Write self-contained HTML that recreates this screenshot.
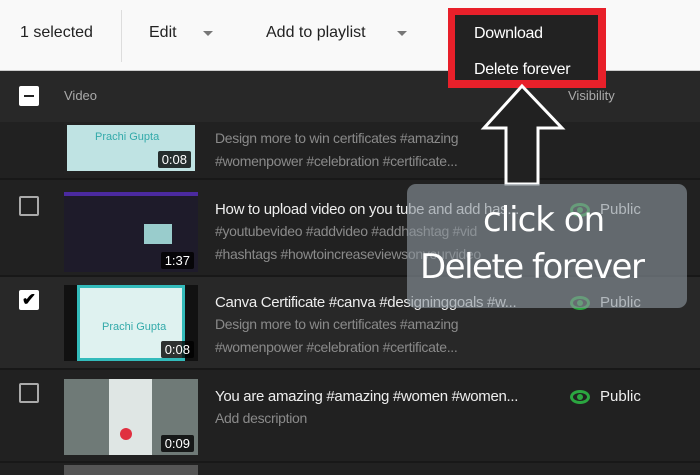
<!DOCTYPE html><html><head><style>
html,body{margin:0;width:700px;height:475px;overflow:hidden}
body{background:#212121;font-family:"Liberation Sans",sans-serif;position:relative}
.a{position:absolute}
.t{color:#eee;font-size:15px;letter-spacing:-0.3px}
.d{color:#8a8a8a;font-size:14px;line-height:23px;letter-spacing:-0.3px}
.cb{position:absolute;left:19px;width:16px;height:16px;border:2px solid #aaa;border-radius:2px}
.th{position:absolute;left:64px;width:134px;height:76px;background:#111;overflow:hidden}
.dur{position:absolute;right:4px;bottom:3px;background:rgba(0,0,0,.8);color:#fff;font-size:13px;padding:1px 4px;border-radius:2px}
.sep{position:absolute;left:0;width:700px;height:2px;background:#181818}
.eye{display:inline-block;width:20px;height:14px;border:3px solid #2ba640;border-radius:50%;vertical-align:middle;margin-right:10px;box-sizing:border-box;position:relative}
.eye:after{content:"";position:absolute;left:4px;top:1px;width:6px;height:6px;background:#2ba640;border-radius:50%}
.pub{position:absolute;left:570px;color:#eee;font-size:15px}
</style></head><body>
<div class="a" style="left:0;top:0;width:700px;height:70px;background:#f9f9f9;border-bottom:1px solid #ccc"></div>
<div class="a" style="left:20px;top:24px;font-size:16px;color:#222">1 selected</div>
<div class="a" style="left:121px;top:10px;width:1px;height:52px;background:#ddd"></div>
<div class="a" style="left:149px;top:24px;font-size:16px;color:#222">Edit</div>
<div class="a" style="left:203px;top:31px;border:5px solid transparent;border-top-color:#777"></div>
<div class="a" style="left:266px;top:24px;font-size:16px;color:#222">Add to playlist</div>
<div class="a" style="left:397px;top:31px;border:5px solid transparent;border-top-color:#777"></div>
<div class="a" style="left:0;top:71px;width:700px;height:51px;background:#282828"></div>
<div class="a" style="left:19px;top:86px;width:20px;height:20px;background:#fff;border-radius:2px"><div class="a" style="left:5px;top:9px;width:10px;height:2px;background:#222"></div></div>
<div class="a" style="left:64px;top:88px;color:#aaa;font-size:13px">Video</div>
<div class="a" style="left:568px;top:88px;color:#aaa;font-size:13px">Visibility</div>
<!-- row0 -->
<div class="th" style="top:122px;height:52px;background:#bfe3e3;border:3px solid #222;box-sizing:border-box"><div style="color:#3aa;font-size:11px;margin:6px 0 0 28px">Prachi Gupta</div><div class="dur">0:08</div></div>
<div class="a d" style="left:215px;top:127px">Design more to win certificates #amazing<br>#womenpower #celebration #certificate...</div>
<div class="sep" style="top:178px"></div>
<!-- row1 -->
<div class="cb" style="top:196px"></div>
<div class="th" style="top:192px;background:#1e1b2a;border-top:4px solid #4b2aa0"><div class="a" style="left:80px;top:28px;width:28px;height:20px;background:#9cc"></div><div class="dur">1:37</div></div>
<div class="a t" style="left:215px;top:201px">How to upload video on you tube and add has...</div>
<div class="a d" style="left:215px;top:220px">#youtubevideo #addvideo #addhashtag #vid<br>#hashtags #howtoincreaseviewsonyourvideo</div>
<div class="pub" style="top:201px"><span class="eye"></span>Public</div>
<div class="sep" style="top:275px"></div>
<!-- row2 -->
<div class="a" style="left:0;top:277px;width:700px;height:91px;background:#282828"></div>
<div class="a" style="left:19px;top:290px;width:20px;height:20px;background:#fff;border-radius:2px;color:#000;font-size:17px;font-weight:bold;text-align:center;line-height:20px">✔</div>
<div class="th" style="top:285px"><div class="a" style="left:13px;top:0;width:108px;height:76px;background:#dff2f0;border:3px solid #3bb;box-sizing:border-box"><div style="color:#3aa;font-size:11px;margin:33px 0 0 22px">Prachi Gupta</div></div><div class="dur">0:08</div></div>
<div class="a t" style="left:215px;top:294px">Canva Certificate #canva #designinggoals #w...</div>
<div class="a d" style="left:215px;top:313px">Design more to win certificates #amazing<br>#womenpower #celebration #certificate...</div>
<div class="pub" style="top:294px"><span class="eye"></span>Public</div>
<div class="sep" style="top:368px"></div>
<!-- row3 -->
<div class="cb" style="top:383px"></div>
<div class="th" style="top:379px;background:#6f7a77"><div class="a" style="left:45px;top:0;width:43px;height:76px;background:#dfe6e4"></div><div class="a" style="left:56px;top:49px;width:12px;height:12px;background:#e03040;border-radius:50%"></div><div class="dur">0:09</div></div>
<div class="a t" style="left:215px;top:388px">You are amazing #amazing #women #women...</div>
<div class="a d" style="left:215px;top:407px">Add description</div>
<div class="pub" style="top:388px"><span class="eye"></span>Public</div>
<div class="sep" style="top:461px"></div>
<div class="th" style="top:465px;height:10px;background:#555"></div>
<!-- popup -->
<div class="a" style="left:448px;top:8px;width:158px;height:80px;background:#e8202a"></div>
<div class="a" style="left:455px;top:15px;width:143px;height:65px;background:#222"></div>
<div class="a" style="left:474px;top:25px;color:#fff;font-size:16px;letter-spacing:-0.3px">Download</div>
<div class="a" style="left:474px;top:61px;color:#fff;font-size:16px;letter-spacing:-0.3px">Delete forever</div>
<!-- arrow -->
<svg class="a" style="left:480px;top:80px" width="90" height="110"><path d="M42 6 L82 48 L58 48 L58 104 L26 104 L26 48 L4 48 Z" fill="#212121" stroke="#fff" stroke-width="3"/></svg>
<!-- box -->
<div class="a" style="left:407px;top:184px;width:280px;height:124px;background:rgba(140,150,158,.62);border-radius:9px"></div>
<div class="a" style="left:483px;top:200px;color:#fff;font-size:34px;font-family:'DejaVu Sans',sans-serif;letter-spacing:-1px">click on</div>
<div class="a" style="left:420px;top:247px;color:#fff;font-size:34px;font-family:'DejaVu Sans',sans-serif;letter-spacing:-1.5px">Delete forever</div>
</body></html>
